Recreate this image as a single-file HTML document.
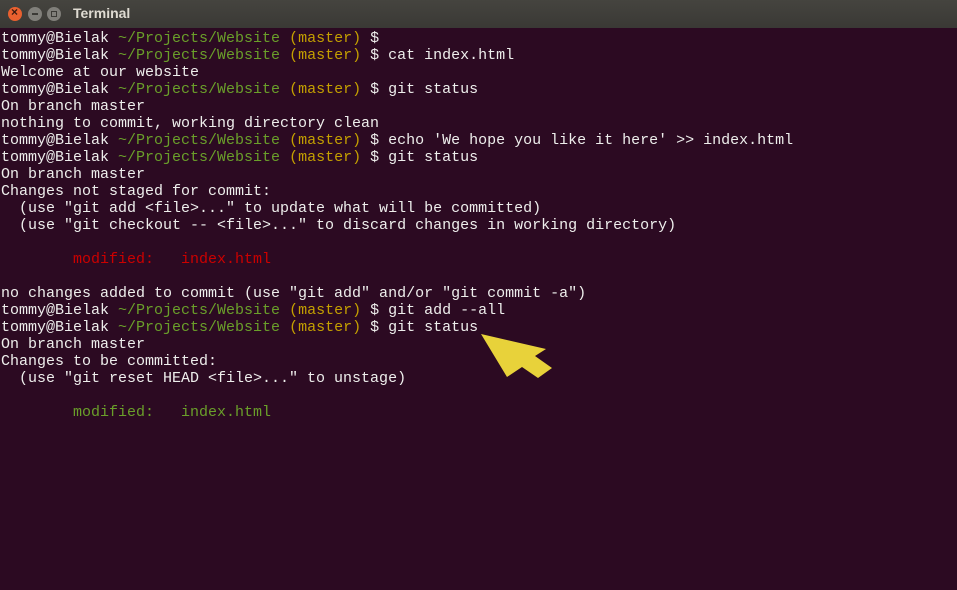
<!DOCTYPE html>
<html><head><meta charset="utf-8"><style>
html,body{margin:0;padding:0;width:957px;height:590px;overflow:hidden;background:#2c0a22;}
#tb{position:absolute;left:0;top:0;width:957px;height:28px;background:linear-gradient(#45443f,#3a3935);}
.b{position:absolute;top:7px;width:14px;height:14px;border-radius:50%;}
#tt{position:absolute;left:73px;top:5px;font:bold 14px "Liberation Sans",sans-serif;color:#dfdbd2;}
pre{position:absolute;left:1px;top:30px;margin:0;font:15px/17px "Liberation Mono",monospace;color:#eeeeec;}
.g{color:#6a9f2a}.y{color:#c4a000}.r{color:#cc0000}
</style></head><body>
<div id="tb">
<div class="b" style="left:8px;background:#e9602f"><span style="position:absolute;left:3px;top:-2px;font:bold 12px 'Liberation Sans';color:#3a1a10">×</span></div>
<div class="b" style="left:28px;background:#807f7a"><div style="position:absolute;left:4px;top:6px;width:6px;height:2px;background:#3b3a36"></div></div>
<div class="b" style="left:47px;background:#807f7a"><div style="position:absolute;left:4px;top:4px;width:4px;height:4px;border:1px solid #3b3a36"></div></div>
<div id="tt">Terminal</div>
</div>
<pre>tommy@Bielak <span class="g">~/Projects/Website</span> <span class="y">(master)</span> $
tommy@Bielak <span class="g">~/Projects/Website</span> <span class="y">(master)</span> $ cat index.html
Welcome at our website
tommy@Bielak <span class="g">~/Projects/Website</span> <span class="y">(master)</span> $ git status
On branch master
nothing to commit, working directory clean
tommy@Bielak <span class="g">~/Projects/Website</span> <span class="y">(master)</span> $ echo 'We hope you like it here' &gt;&gt; index.html
tommy@Bielak <span class="g">~/Projects/Website</span> <span class="y">(master)</span> $ git status
On branch master
Changes not staged for commit:
  (use "git add &lt;file&gt;..." to update what will be committed)
  (use "git checkout -- &lt;file&gt;..." to discard changes in working directory)

        <span class="r">modified:   index.html</span>

no changes added to commit (use "git add" and/or "git commit -a")
tommy@Bielak <span class="g">~/Projects/Website</span> <span class="y">(master)</span> $ git add --all
tommy@Bielak <span class="g">~/Projects/Website</span> <span class="y">(master)</span> $ git status
On branch master
Changes to be committed:
  (use "git reset HEAD &lt;file&gt;..." to unstage)

        <span class="g">modified:   index.html</span>
</pre>
<svg style="position:absolute;left:0;top:0" width="957" height="590"><polygon points="481,334 546,349 535,356 552,368 538,378 522,367 507,377" fill="#e8d23a"/></svg>
</body></html>
